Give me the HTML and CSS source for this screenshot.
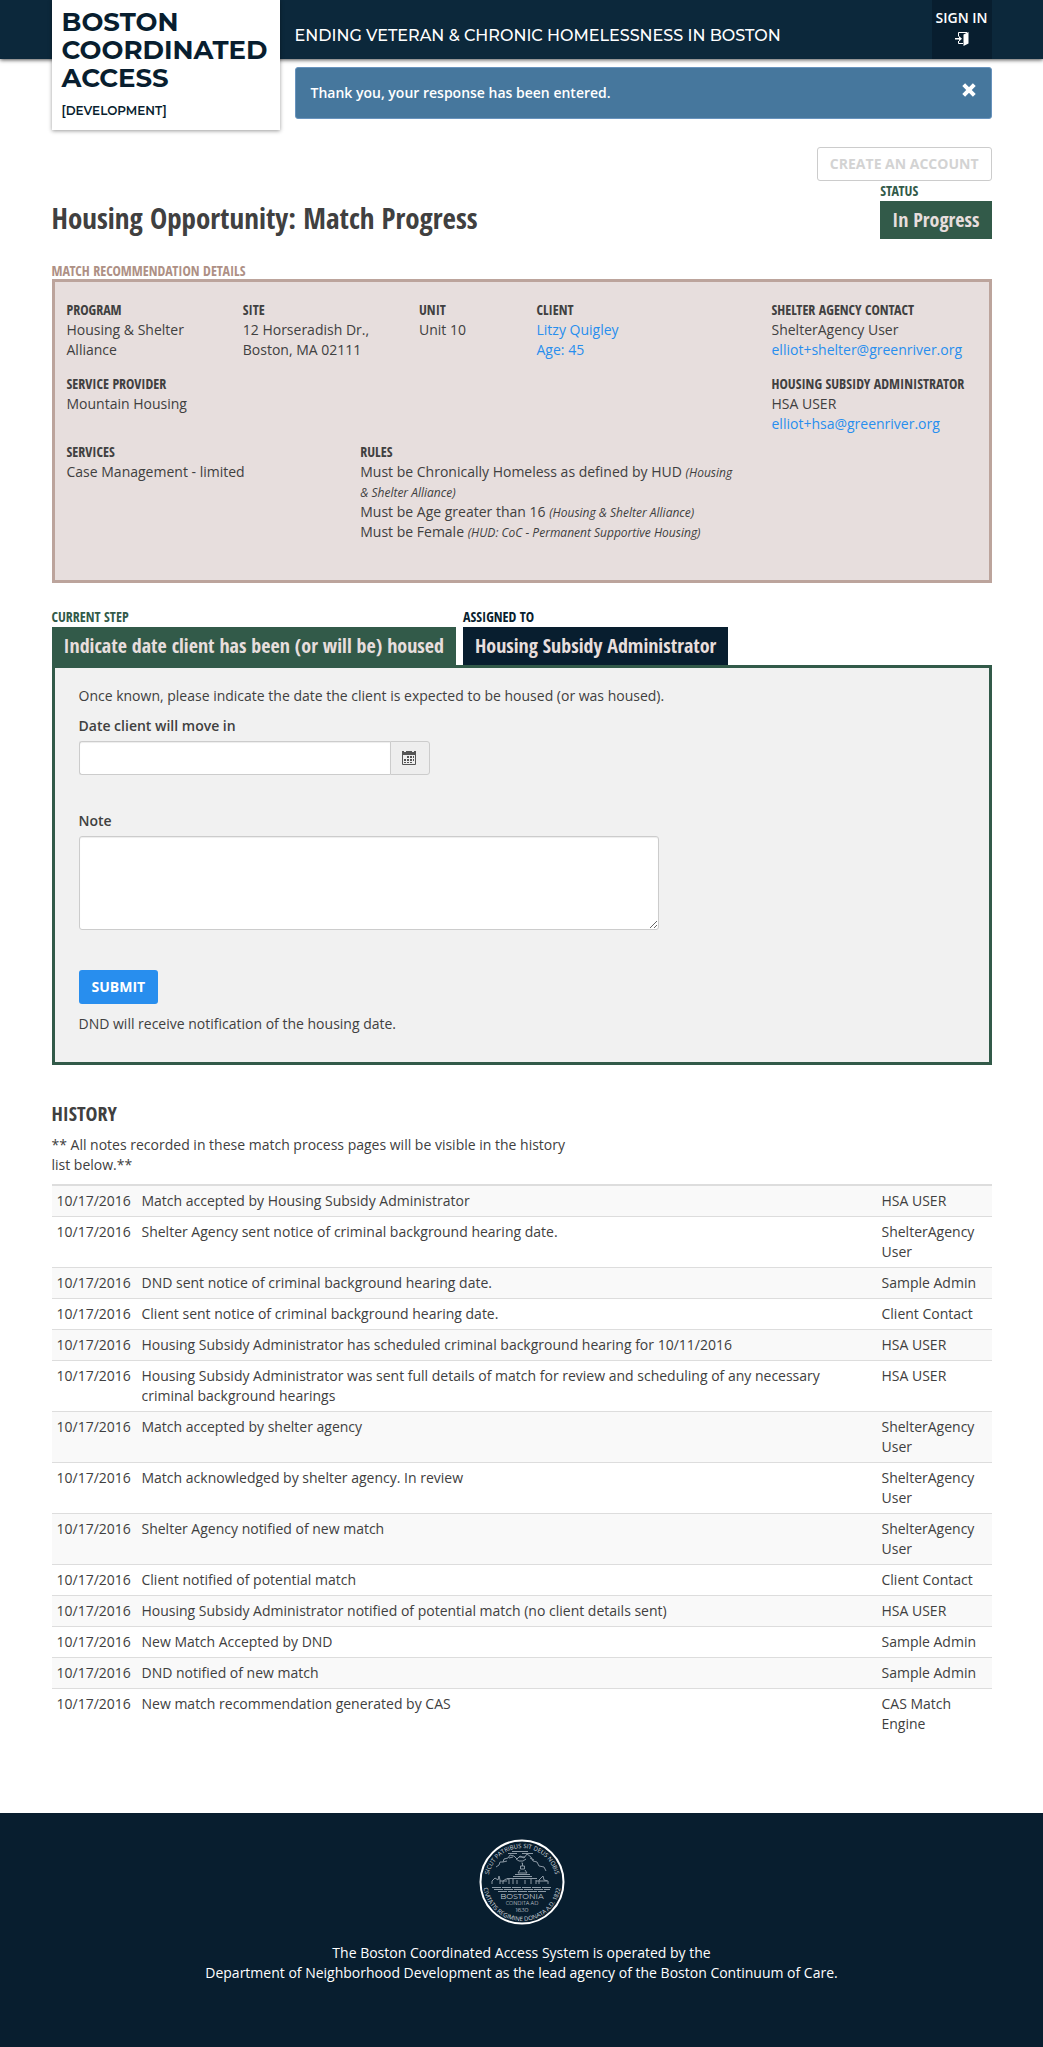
FILE: index.html
```html
<!DOCTYPE html>
<html lang="en">
<head>
<meta charset="utf-8">
<meta name="viewport" content="width=device-width, initial-scale=1">
<title>Boston Coordinated Access</title>
<link rel="stylesheet" href="styles.css">
</head>
<body>
<header class="site-header">
  <div class="container header-row">
    <a class="logo" href="#">
      <span class="logo-name">Boston<br>Coordinated<br>Access</span>
      <span class="logo-env">[Development]</span>
    </a>
    <p class="tagline">Ending Veteran &amp; Chronic Homelessness in Boston</p>
    <a class="sign-in" href="#">Sign In
      <svg class="icon" viewBox="0 0 14 14" aria-hidden="true"><path d="M3.500 4.500v-4H12M3.500 9v2.500H8" fill="none" stroke="#fff" stroke-width="1"/><path d="M0 6h4V4l3 2.700-3 2.700V7.500H0zM8.500 2.500L13.500 0v11.500L8.500 14z" fill="#fff"/></svg>
    </a>
  </div>
</header>

<main class="container">
  <div class="alert" role="alert">
    <span>Thank you, your response has been entered.</span>
    <button class="alert-close" type="button" aria-label="Close"><svg class="icon" viewBox="0 0 14 14" aria-hidden="true"><path d="M1.700 1.700l10.600 10.600M12.300 1.700L1.700 12.300" stroke="#fff" stroke-width="4"/></svg></button>
  </div>

  <div class="account-row"><a class="btn btn-outline" href="#">Create an Account</a></div>

  <div class="title-row">
    <h1>Housing Opportunity: Match Progress</h1>
    <div class="tab tab-green">
      <span class="tab-label">Status</span>
      <span class="tab-value">In Progress</span>
    </div>
  </div>

  <h2 class="section-label">Match Recommendation Details</h2>
  <section class="details">
    <div class="details-main">
      <div class="span-3"><h3>Program</h3><p>Housing &amp; Shelter Alliance</p></div>
      <div class="span-3"><h3>Site</h3><p>12 Horseradish Dr., Boston, MA 02111</p></div>
      <div class="span-2"><h3>Unit</h3><p>Unit 10</p></div>
      <div class="span-4"><h3>Client</h3><p><a href="#">Litzy Quigley<br>Age: 45</a></p></div>
      <div class="span-12"><h3>Service Provider</h3><p>Mountain Housing</p></div>
      <div class="span-5 lower"><h3>Services</h3><p>Case Management - limited</p></div>
      <div class="span-7 lower">
        <h3>Rules</h3>
        <p>Must be Chronically Homeless as defined by HUD <em>(Housing &amp; Shelter Alliance)</em></p>
        <p>Must be Age greater than 16 <em>(Housing &amp; Shelter Alliance)</em></p>
        <p>Must be Female <em>(HUD: CoC - Permanent Supportive Housing)</em></p>
      </div>
    </div>
    <div class="details-contacts">
      <div><h3>Shelter Agency Contact</h3><p>ShelterAgency User<br><a href="#">elliot+shelter@greenriver.org</a></p></div>
      <div><h3>Housing Subsidy Administrator</h3><p>HSA USER<br><a href="#">elliot+hsa@greenriver.org</a></p></div>
    </div>
  </section>

  <div class="tabs">
    <div class="tab tab-green">
      <span class="tab-label">Current Step</span>
      <span class="tab-value">Indicate date client has been (or will be) housed</span>
    </div>
    <div class="tab tab-navy">
      <span class="tab-label">Assigned To</span>
      <span class="tab-value">Housing Subsidy Administrator</span>
    </div>
  </div>
  <form class="step">
    <p>Once known, please indicate the date the client is expected to be housed (or was housed).</p>
    <div class="field">
      <label for="move-in">Date client will move in</label>
      <div class="input-group">
        <input class="input" id="move-in" type="text">
        <button class="addon" type="button" aria-label="Open calendar"><svg class="icon" viewBox="0 0 14 14" aria-hidden="true"><path d="M0 0h2v1h2V0h6v1h2V0h2v4H0z" fill="#555"/><path d="M.5 4v9.500h13V4" fill="none" stroke="#555"/><path d="M5 5h2v2H5zM8 5h2v2H8zM11 5h1v2h-1zM2 8h2v2H2zM5 8h2v2H5zM8 8h2v2H8zM11 8h1v2h-1zM2 11h2v1H2zM5 11h2v1H5zM8 11h2v1H8z" fill="#555"/></svg></button>
      </div>
    </div>
    <div class="field">
      <label for="note">Note</label>
      <textarea class="input note" id="note"></textarea>
    </div>
    <button class="btn btn-primary" type="submit">Submit</button>
    <p>DND will receive notification of the housing date.</p>
  </form>

  <h2 class="history-title">History</h2>
  <p class="history-note">** All notes recorded in these match process pages will be visible in the history list below.**</p>
  <table class="history">
    <tbody>
      <tr><td class="date">10/17/2016</td><td>Match accepted by Housing Subsidy Administrator</td><td class="who">HSA USER</td></tr>
      <tr><td class="date">10/17/2016</td><td>Shelter Agency sent notice of criminal background hearing date.</td><td class="who">ShelterAgency User</td></tr>
      <tr><td class="date">10/17/2016</td><td>DND sent notice of criminal background hearing date.</td><td class="who">Sample Admin</td></tr>
      <tr><td class="date">10/17/2016</td><td>Client sent notice of criminal background hearing date.</td><td class="who">Client Contact</td></tr>
      <tr><td class="date">10/17/2016</td><td>Housing Subsidy Administrator has scheduled criminal background hearing for 10/11/2016</td><td class="who">HSA USER</td></tr>
      <tr><td class="date">10/17/2016</td><td>Housing Subsidy Administrator was sent full details of match for review and scheduling of any necessary criminal background hearings</td><td class="who">HSA USER</td></tr>
      <tr><td class="date">10/17/2016</td><td>Match accepted by shelter agency</td><td class="who">ShelterAgency User</td></tr>
      <tr><td class="date">10/17/2016</td><td>Match acknowledged by shelter agency. In review</td><td class="who">ShelterAgency User</td></tr>
      <tr><td class="date">10/17/2016</td><td>Shelter Agency notified of new match</td><td class="who">ShelterAgency User</td></tr>
      <tr><td class="date">10/17/2016</td><td>Client notified of potential match</td><td class="who">Client Contact</td></tr>
      <tr><td class="date">10/17/2016</td><td>Housing Subsidy Administrator notified of potential match (no client details sent)</td><td class="who">HSA USER</td></tr>
      <tr><td class="date">10/17/2016</td><td>New Match Accepted by DND</td><td class="who">Sample Admin</td></tr>
      <tr><td class="date">10/17/2016</td><td>DND notified of new match</td><td class="who">Sample Admin</td></tr>
      <tr><td class="date">10/17/2016</td><td>New match recommendation generated by CAS</td><td class="who">CAS Match Engine</td></tr>
    </tbody>
  </table>
</main>

<footer class="site-footer">
  <svg class="seal" viewBox="0 0 86 86" role="img" aria-label="Seal of the City of Boston">
    <defs>
      <path id="ring-top" d="M9 43a34 34 0 0 1 68 0"/>
      <path id="ring-bottom" d="M4 43a39 39 0 0 0 78 0"/>
    </defs>
    <circle cx="43" cy="43" r="41.500" fill="none" stroke="#fff" stroke-width="2"/>
    <g class="seal-ring">
      <text><textPath href="#ring-top" startOffset="50%" text-anchor="middle">SICUT PATRIBUS SIT DEUS NOBIS</textPath></text>
      <text><textPath href="#ring-bottom" startOffset="50%" text-anchor="middle">CIVITATIS REGIMINE DONATA A.D. 1822</textPath></text>
    </g>
    <g class="seal-text">
      <text x="43" y="60" font-size="8" text-anchor="middle">BOSTONIA</text>
      <text x="43" y="66" font-size="5" text-anchor="middle">CONDITA AD</text>
      <text x="43" y="73" font-size="6" text-anchor="middle">1630</text>
    </g>
    <g class="seal-art">
      <path d="M33 12.500h16M29 14.500h9M43 14.500h11M17 28l3-2 1-3 3 0 1-3 4-1 2-3 4 1 3 3 3-3 4 2 3-4 4 3 2 4 4 1 2 4 5 1 2 4M24 23l4-1M30 19l4-1M37 20l3 2h4l3-2M51 19l4 2M40 18h6"/>
      <path d="M42.500 24h1v3h-2v3h4v-3h-2M41 31l-2 3h9l-2-3M36 35.500h15M34 37.500h19M28 39.500h30M13 45v-3l3-3 3 2 1-4 1 4v4M24 45v-3l3-2h3v5M34 40v5M38 41v4M46 41v4M52 40v5M57 41v4M60 45v-4l4-4 1 4 4 1v3M21 42h7M57 42h11"/>
      <path d="M13 48.500h60M15 50.500h56M19 52.500h48" stroke-dasharray="9 1"/>
    </g>
  </svg>
  <p>The Boston Coordinated Access System is operated by the<br>Department of Neighborhood Development as the lead agency of the Boston Continuum of Care.</p>
</footer>
</body>
</html>
```
FILE: styles.css
```css
*,
*::before,
*::after {
  box-sizing: border-box;
}

body {
  margin: 0;
  font: 14px/20px "Open Sans", sans-serif;
  color: #404040;
  background: #fff;
}

h1,
h2,
h3,
p {
  margin: 0;
}

h1,
h2,
h3,
.tab {
  font-family: "Open Sans Condensed", "Liberation Sans Narrow", "Open Sans", sans-serif;
  font-weight: 700;
}

a {
  color: #288eee;
  text-decoration: none;
}

.container {
  width: 100%;
  max-width: 970px;
  margin: 0 auto;
  padding: 0 15px;
}

.icon {
  display: block;
  width: 14px;
  height: 14px;
}

/* Header */

.site-header {
  position: relative;
  background: #0c283b;
  box-shadow: 0 1px 4px rgba(0, 0, 0, 0.7);
}

.header-row {
  display: flex;
  height: 59px;
}

.logo {
  flex: none;
  width: 228px;
  height: 130px;
  padding: 8px 10px;
  color: #081e2f;
  background: #fff;
  box-shadow: 0 1px 4px rgba(0, 0, 0, 0.4);
  font-family: Montserrat, Inter, sans-serif;
  font-weight: 700;
  text-transform: uppercase;
}

.logo-name,
.logo-env {
  display: block;
}

.logo-name {
  font-size: 26px;
  line-height: 28px;
}

.logo-env {
  margin-top: 9px;
  font-size: 12px;
  font-weight: 600;
}

.tagline {
  flex: 1;
  padding: 26px 0 0 15px;
  color: #fff;
  font-family: Montserrat, Inter, sans-serif;
  font-size: 16px;
  font-weight: 500;
  text-transform: uppercase;
}

.sign-in {
  display: flex;
  flex-direction: column;
  align-items: center;
  width: 60px;
  padding-top: 8px;
  gap: 4px;
  color: #fff;
  background: #081e2f;
  font-weight: 600;
  text-transform: uppercase;
  white-space: nowrap;
}

/* Alert and page title */

.alert {
  display: flex;
  justify-content: space-between;
  align-items: flex-start;
  margin: 8px 0 28px 243px;
  padding: 15px;
  border: 1px solid #6893bd;
  border-radius: 3px;
  color: #fff;
  background: #46779d;
  font-weight: 600;
}

.alert-close {
  padding: 0;
  border: 0;
  background: none;
}

.account-row {
  display: flex;
  justify-content: flex-end;
}

.btn {
  display: inline-block;
  padding: 6px 12px;
  border: 1px solid transparent;
  border-radius: 3px;
  font: 700 14px/20px "Open Sans", sans-serif;
  text-transform: uppercase;
}

.btn-outline {
  border-color: #ccc;
  color: #d3d3d3;
}

.btn-primary {
  color: #fff;
  background: #288eee;
}

.title-row {
  display: flex;
  justify-content: space-between;
  align-items: flex-start;
}

h1 {
  padding-top: 21px;
  font-size: 29px;
  line-height: 32px;
}

.tab-label,
.tab-value {
  display: block;
}

.tab-label {
  text-transform: uppercase;
}

.tab-value {
  padding: 4px 12px;
  color: #e7dedd;
  font-size: 20px;
  line-height: 30px;
}

.tab-green .tab-label {
  color: #325a49;
}

.tab-green .tab-value {
  background: #325a49;
}

.tab-navy .tab-label {
  color: #081e2f;
}

.tab-navy .tab-value {
  background: #081e2f;
}

/* Match details */

.section-label {
  margin-top: 24px;
  color: #ae9085;
  font-size: 14px;
  line-height: 16px;
  text-transform: uppercase;
}

.details {
  display: grid;
  grid-template-columns: minmax(0, 1fr) 217px;
  padding: 18px 0 38px 12px;
  border: 3px solid #bca49c;
  background: #e7dedd;
}

.details h3 {
  font-size: 14px;
  line-height: 20px;
  text-transform: uppercase;
}

.details em {
  font-size: 12px;
  line-height: 16px;
}

.details-main {
  display: grid;
  grid-template-columns: repeat(12, minmax(0, 1fr));
  align-content: start;
  row-gap: 14px;
}

.details-main > div {
  padding-right: 30px;
}

.span-2 {
  grid-column: span 2;
}

.span-3 {
  grid-column: span 3;
}

.span-4 {
  grid-column: span 4;
}

.span-5 {
  grid-column: span 5;
}

.span-7 {
  grid-column: span 7;
}

.span-12 {
  grid-column: span 12;
}

.lower {
  margin-top: 14px;
}

.details-contacts {
  display: flex;
  flex-direction: column;
  gap: 14px;
}

/* Current step */

.tabs {
  display: flex;
  gap: 7px;
  margin-top: 24px;
}

.step {
  padding: 18px 24px 28px;
  border: 3px solid #325a49;
  background: #f1f1f1;
}

.field {
  margin: 10px 0 36px;
}

.field label {
  display: block;
  margin-bottom: 5px;
  font-weight: 600;
}

.input {
  display: block;
  height: 34px;
  padding: 6px 12px;
  border: 1px solid #ccc;
  border-radius: 3px;
  background: #fff;
  box-shadow: inset 0 1px 1px rgba(0, 0, 0, 0.075);
  font: inherit;
}

.input-group {
  display: flex;
  max-width: 351px;
}

.input-group .input {
  flex: 1;
  min-width: 0;
  border-right: 0;
  border-radius: 3px 0 0 3px;
}

.addon {
  display: grid;
  place-items: center;
  width: 40px;
  padding: 0 2px 0 0;
  border: 1px solid #ccc;
  border-radius: 0 3px 3px 0;
  background: #eee;
}

.note {
  width: 100%;
  max-width: 580px;
  height: 94px;
}

.step .btn {
  margin: 4px 0 10px;
}

/* History */

.history-title {
  margin-top: 34px;
  font-size: 20px;
  line-height: 30px;
  text-transform: uppercase;
}

.history-note {
  max-width: 524px;
  margin: 6px 0 9px;
}

.history {
  width: 100%;
  border-collapse: collapse;
  border-top: 2px solid #ddd;
}

.history td {
  padding: 5px;
  border-top: 1px solid #ddd;
  vertical-align: top;
}

.history tr:nth-child(odd) {
  background: #f9f9f9;
}

.history .date {
  width: 85px;
}

.history .who {
  width: 115px;
}

/* Footer */

.site-footer {
  margin-top: 74px;
  padding: 26px 15px 64px;
  color: #fff;
  background: #081e2f;
  text-align: center;
}

.seal {
  display: block;
  width: 86px;
  height: 86px;
  margin: 0 auto 18px;
}

.seal-ring {
  fill: #d5dadf;
  font-size: 6px;
}

.seal-text {
  fill: #c3cad0;
  font-family: Montserrat, Inter, sans-serif;
}

.seal-art {
  fill: none;
  stroke: #8c99a5;
}
```
